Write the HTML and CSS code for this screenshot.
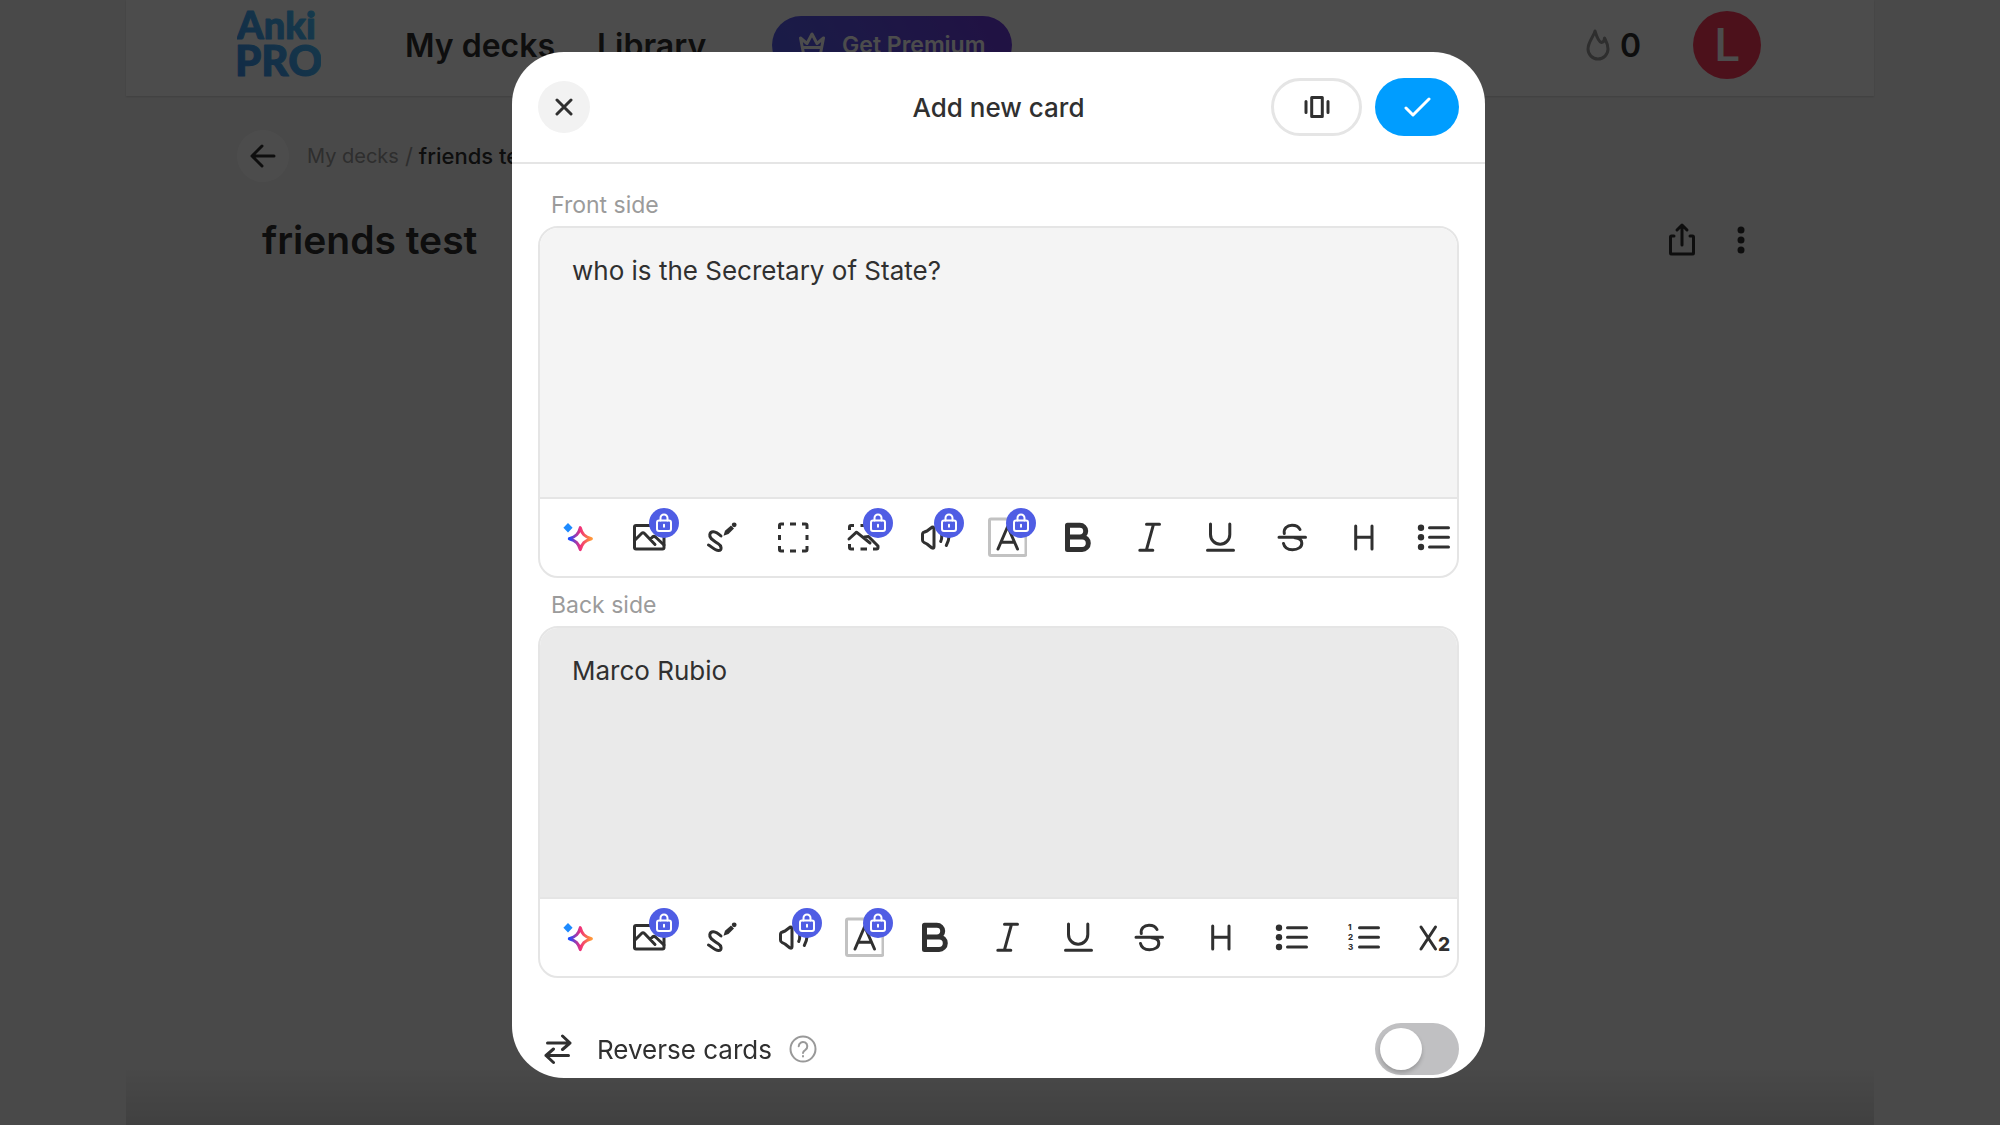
FILE: index.html
```html
<!DOCTYPE html>
<html lang="en">

<head>
    <meta charset="UTF-8">
    <meta name="viewport" content="width=device-width, initial-scale=1.0">
    <title>Anki Pro - friends test</title>
    <link rel="stylesheet" href="styles.css">
</head>

<body>

    <!-- shared icons -->
    <svg class="sprite" width="0" height="0" aria-hidden="true">
        <defs>
            <linearGradient id="spark" x1="0" y1="0" x2="1" y2="0">
                <stop offset="0" stop-color="#1a4bff" />
                <stop offset="0.5" stop-color="#f0307a" />
                <stop offset="1" stop-color="#ff9838" />
            </linearGradient>
            <linearGradient id="logo" gradientUnits="userSpaceOnUse" x1="0" y1="70" x2="84" y2="0">
                <stop offset="0" stop-color="#3c8ee8" />
                <stop offset="1" stop-color="#4bc4ff" />
            </linearGradient>
        </defs>
        <symbol id="i-ai" viewBox="0 0 40 40">
            <path fill="#1e8bff" stroke="none" d="M9 6l4.600 4.700L9 15.400l-4.600-4.700z" />
            <path stroke="url(#spark)" d="M21.300 10.600C23 17 25.500 19.500 32.400 21.700C25.500 23.800 23 26.300 21.300 32.600C19.600 26.300 17 23.800 10.300 21.700C17 19.500 19.600 17 21.300 10.600z" />
        </symbol>
        <symbol id="i-image" viewBox="0 0 40 40">
            <rect x="4.500" y="8.500" width="29.500" height="23.500" rx="1.500" />
            <path d="M5 23l6.500-6.500q1.500-1.500 3 0L25 27.500M20.500 22l2-2q1.500-1.300 3 0L34 28" />
        </symbol>
        <symbol id="i-draw" viewBox="0 0 40 40">
            <path d="M6.500 28C9.500 29.500 12.500 33.500 16.500 33.500C20.500 33.500 19.500 28.500 16 26.500C11.500 23.500 7 21.500 7.800 17.500C8.600 13.500 13 13.500 19 19" />
            <path class="solid" d="M21.500 18.800l1.500-5 6-5.300 3 3-5.500 5.500z" />
            <circle class="solid" cx="32.200" cy="7.800" r="2.400" />
        </symbol>
        <symbol id="i-select" viewBox="0 0 40 40">
            <path class="cut" d="M6.500 12V8.500a1.500 1.500 0 0 1 1.500-1.500H11M17 7h6M29 7h3.500a1.500 1.500 0 0 1 1.500 1.500V12M34 18v5M34 29v3.500a1.500 1.500 0 0 1-1.500 1.500H29M23 34h-6M11 34H8a1.500 1.500 0 0 1-1.500-1.500V29M6.500 23v-5" />
        </symbol>
        <symbol id="i-scan" viewBox="0 0 40 40">
            <path class="cut" d="M5.500 13V10a1.500 1.500 0 0 1 1.500-1.500H10M16.500 8.500h6.500M29 8.500h3.500a1.500 1.500 0 0 1 1.500 1.500v3M34 29.500v1a1.500 1.500 0 0 1-1.500 1.500H29M23 32h-6.500M10 32H7a1.500 1.500 0 0 1-1.500-1.500V27" />
            <path d="M5 22L12.500 15.200L26 26M20.500 20l4-.5L34 29" />
        </symbol>
        <symbol id="i-audio" viewBox="0 0 40 40">
            <path d="M7.500 17.500q0-2 2-2.500l2.500-1 5-3.800q2-1 2 1.600V29.500q0 2.500-2 1.500l-5-4-3-1.500q-1.500-.7-1.500-2.500z" />
            <path d="M25.500 14q2.500 5.500.2 10.500M32 10q4.500 9-.7 18.500" />
        </symbol>
        <symbol id="i-color" viewBox="0 0 40 40">
            <rect class="frame" x="2.500" y="2" width="36.500" height="36.500" rx="1.500" />
            <path d="M11 32L20.700 9.500L30.500 32M14 25.300h13.500" />
        </symbol>
        <symbol id="i-bold" viewBox="0 0 40 40">
            <path stroke-width="5" d="M9.500 8.200H21.800a5.900 5.900 0 0 1 0 11.800H9.500M21.500 20h2.600a6.200 6.200 0 0 1 0 12.400H9.500V8.200" />
        </symbol>
        <symbol id="i-italic" viewBox="0 0 40 40">
            <path d="M17.500 7.300h13M10.800 33.300h13M24.500 7.300L17.300 33.300" />
        </symbol>
        <symbol id="i-underline" viewBox="0 0 40 40">
            <path d="M10.500 7v10.500a9.600 9.600 0 0 0 19.300 0V7M7.500 33.300h26" />
        </symbol>
        <symbol id="i-strike" viewBox="0 0 40 40">
            <path d="M7 20.300h26.500M12.300 16.500C11.500 11.500 15 8.200 20 8.200C24 8.200 26.800 9.800 28 12.500M11.500 26.500C12.500 31 16 32.700 20.500 32.700C26 32.700 30 30 29.800 26C29.700 23 27 21.200 23 20.800" />
        </symbol>
        <symbol id="i-heading" viewBox="0 0 40 40">
            <path d="M12.700 9v23M29 9v23M12.700 20.300H29" />
        </symbol>
        <symbol id="i-list" viewBox="0 0 40 40">
            <path d="M15.500 10.700H34.500M15.500 20.300H34.500M15.500 30H34.500" />
            <circle class="solid" cx="7" cy="10.700" r="3.200" />
            <circle class="solid" cx="7" cy="20.300" r="3.200" />
            <circle class="solid" cx="7" cy="30" r="3.200" />
        </symbol>
        <symbol id="i-lock" viewBox="0 0 30 30">
            <rect x="8" y="12.500" width="14" height="10.500" rx="2" />
            <path d="M11.500 12.500V10a3.500 3.500 0 0 1 7 0v2.500M15 16.700v2" />
        </symbol>
    </svg>

    <div class="page">
        <header class="topbar">
            <a class="logo" href="#" aria-label="Anki Pro">
                <svg width="84" height="72" viewBox="0 0 84 72">
                    <g fill="url(#logo)" stroke="url(#logo)">
                        <text x="0" y="30" font-size="38">Anki</text>
                        <text x="-2" y="67" font-size="42">PRO</text>
                    </g>
                </svg>
            </a>
            <nav class="nav">
                <a href="#">My decks</a>
                <a href="#">Library</a>
            </nav>
            <button class="premium" type="button">
                <svg width="26" height="26" viewBox="0 0 26 26"><path d="M1.500 6L4.500 21.500H21.500L24.500 6L18 11.500L13 2L8 11.500zM4 15.500H22" /></svg>
                Get Premium
            </button>
            <div class="streak">
                <svg width="24" height="32" viewBox="0 0 24 32"><path d="M9 2C8 7 2 13 2 20a10 10 0 0 0 20 0C22 15 20 12 18.500 9C18.300 12 17 13.500 15.500 13.500C13 13 10.500 7 9 2z" /></svg>
                0
            </div>
            <button class="avatar" type="button">L</button>
        </header>

        <main class="deck">
            <div class="crumbs">
                <button class="back" type="button" aria-label="Back">
                    <svg width="26" height="26" viewBox="0 0 26 26"><path d="M24 13H2M12 3L2 13l10 10" /></svg>
                </button>
                <a href="#">My decks</a>
                <span class="slash">/</span>
                <span class="current">friends test</span>
            </div>
            <div class="deck-head">
                <h1>friends test</h1>
                <button type="button" aria-label="Share">
                    <svg width="28" height="36" viewBox="0 0 28 36"><path d="M6 14H3.500a1 1 0 0 0-1 1V31a1 1 0 0 0 1 1H24.500a1 1 0 0 0 1-1V15a1 1 0 0 0-1-1H22M14 23V3.500M9 8l5-5 5 5" /></svg>
                </button>
                <button type="button" aria-label="More">
                    <svg class="dots" width="8" height="28" viewBox="0 0 8 28"><circle cx="4" cy="4" r="3.500" /><circle cx="4" cy="14" r="3.500" /><circle cx="4" cy="24" r="3.500" /></svg>
                </button>
            </div>
        </main>
        <div class="fade"></div>
    </div>

    <div class="overlay">
        <form class="modal" role="dialog" aria-labelledby="modal-title">
            <div class="modal-head">
                <button class="close" type="button" aria-label="Close">
                    <svg width="18" height="18" viewBox="0 0 18 18"><path d="M2 2l14 14M16 2L2 16" /></svg>
                </button>
                <h2 id="modal-title">Add new card</h2>
                <div class="actions">
                    <button class="preview" type="button" aria-label="Preview">
                        <svg width="28" height="24" viewBox="0 0 28 24"><path d="M8.700 2.500H19.300V21.500H8.700zM3 6.500v11M25 6.500v11" /></svg>
                    </button>
                    <button class="save" type="submit" aria-label="Save">
                        <svg width="28" height="20" viewBox="0 0 28 20"><path d="M3 11l7 7L26 2" /></svg>
                    </button>
                </div>
            </div>

            <div class="modal-body">
                <label class="side-label" for="front">Front side</label>
                <div class="editor front">
                    <textarea id="front" spellcheck="false">who is the Secretary of State?</textarea>
                    <div class="toolbar">
                        <button type="button" aria-label="AI"><svg><use href="#i-ai" /></svg></button>
                        <button type="button" aria-label="Image"><svg><use href="#i-image" /></svg><span class="lock"><svg><use href="#i-lock" /></svg></span></button>
                        <button type="button" aria-label="Draw"><svg><use href="#i-draw" /></svg></button>
                        <button type="button" aria-label="Cloze"><svg><use href="#i-select" /></svg></button>
                        <button type="button" aria-label="Image occlusion"><svg><use href="#i-scan" /></svg><span class="lock"><svg><use href="#i-lock" /></svg></span></button>
                        <button type="button" aria-label="Audio"><svg><use href="#i-audio" /></svg><span class="lock"><svg><use href="#i-lock" /></svg></span></button>
                        <button type="button" aria-label="Text color"><svg><use href="#i-color" /></svg><span class="lock"><svg><use href="#i-lock" /></svg></span></button>
                        <button type="button" aria-label="Bold"><svg><use href="#i-bold" /></svg></button>
                        <button type="button" aria-label="Italic"><svg><use href="#i-italic" /></svg></button>
                        <button type="button" aria-label="Underline"><svg><use href="#i-underline" /></svg></button>
                        <button type="button" aria-label="Strikethrough"><svg><use href="#i-strike" /></svg></button>
                        <button type="button" aria-label="Heading"><svg><use href="#i-heading" /></svg></button>
                        <button type="button" aria-label="Bullet list"><svg><use href="#i-list" /></svg></button>
                    </div>
                </div>

                <label class="side-label" for="back">Back side</label>
                <div class="editor back-side">
                    <textarea id="back" spellcheck="false">Marco Rubio</textarea>
                    <div class="toolbar">
                        <button type="button" aria-label="AI"><svg><use href="#i-ai" /></svg></button>
                        <button type="button" aria-label="Image"><svg><use href="#i-image" /></svg><span class="lock"><svg><use href="#i-lock" /></svg></span></button>
                        <button type="button" aria-label="Draw"><svg><use href="#i-draw" /></svg></button>
                        <button type="button" aria-label="Audio"><svg><use href="#i-audio" /></svg><span class="lock"><svg><use href="#i-lock" /></svg></span></button>
                        <button type="button" aria-label="Text color"><svg><use href="#i-color" /></svg><span class="lock"><svg><use href="#i-lock" /></svg></span></button>
                        <button type="button" aria-label="Bold"><svg><use href="#i-bold" /></svg></button>
                        <button type="button" aria-label="Italic"><svg><use href="#i-italic" /></svg></button>
                        <button type="button" aria-label="Underline"><svg><use href="#i-underline" /></svg></button>
                        <button type="button" aria-label="Strikethrough"><svg><use href="#i-strike" /></svg></button>
                        <button type="button" aria-label="Heading"><svg><use href="#i-heading" /></svg></button>
                        <button type="button" aria-label="Bullet list"><svg><use href="#i-list" /></svg></button>
                        <button type="button" aria-label="Numbered list">
                            <svg viewBox="0 0 40 40">
                                <path d="M16.500 10.700H35.500M16.500 20.300H35.500M16.500 30H35.500" />
                                <text class="num" x="5" y="13">1</text>
                                <text class="num" x="5" y="23">2</text>
                                <text class="num" x="5" y="33">3</text>
                            </svg>
                        </button>
                        <button type="button" aria-label="Subscript">
                            <svg viewBox="0 0 40 40">
                                <path d="M7 10L21.500 32M21.500 10L7 32" />
                                <text class="sub" x="24" y="34">2</text>
                            </svg>
                        </button>
                    </div>
                </div>

                <div class="reverse">
                    <svg class="swap" width="28" height="32" viewBox="0 0 28 32"><path d="M3.500 10H26M18.500 3L26 10l-7.500 6.500M24.500 22.500H2M9.500 16L2 22.500l7.500 7" /></svg>
                    <label for="reverse">Reverse cards</label>
                    <button class="help" type="button" aria-label="Help">
                        <svg width="28" height="28" viewBox="0 0 28 28">
                            <circle cx="14" cy="14" r="12.500" />
                            <path d="M9.700 11.200a4.300 4.300 0 1 1 6.700 3.600Q14 16.300 14 18M14 21v.4" />
                        </svg>
                    </button>
                    <input class="switch" id="reverse" type="checkbox">
                </div>
            </div>
        </form>
    </div>

</body>

</html>
```
FILE: styles.css
```css
* {
    box-sizing: border-box;
}

body {
    margin: 0;
    background: #f5f5f5;
    color: #303030;
    font-family: Inter, "Liberation Sans", sans-serif;
}

a {
    color: inherit;
    text-decoration: none;
}

h1,
h2 {
    margin: 0;
}

button {
    display: flex;
    align-items: center;
    justify-content: center;
    padding: 0;
    border: 0;
    background: none;
    color: inherit;
    font: inherit;
    cursor: pointer;
}

svg {
    display: block;
    fill: none;
    stroke: currentColor;
    stroke-width: 3;
    stroke-linecap: round;
    stroke-linejoin: round;
}

.sprite {
    position: absolute;
}

/* page behind the modal */
.page {
    display: flex;
    flex-direction: column;
    max-width: 1748px;
    min-height: 100vh;
    margin: 0 auto;
}

.topbar {
    display: flex;
    align-items: center;
    height: 96px;
    padding: 0 113px 6px 111px;
    background: #fff;
    box-shadow: 0 1px 2px rgba(0, 0, 0, 0.15);
}

.logo text {
    font-family: Lato, sans-serif;
    font-weight: 900;
    stroke-width: 1;
}

.nav {
    display: flex;
    gap: 42px;
    margin: 0 66px 0 84px;
    font-size: 32px;
    font-weight: 600;
}

.premium {
    gap: 17px;
    width: 240px;
    height: 58px;
    border-radius: 29px;
    background: linear-gradient(60deg, #5660f0, #6f3ae0);
    color: #fff;
    font-size: 23px;
    font-weight: 600;
}

.streak {
    display: flex;
    align-items: center;
    gap: 10px;
    margin-left: auto;
    font-size: 32px;
    font-weight: 600;
}

.streak svg {
    color: #999;
}

.avatar {
    width: 68px;
    height: 68px;
    margin-left: 52px;
    border-radius: 50%;
    background: #ff3b5c;
    color: #fff;
    font-family: Roboto, sans-serif;
    font-size: 46px;
    font-weight: 500;
}

.deck {
    padding: 34px 113px 34px 111px;
}

.crumbs {
    display: flex;
    align-items: center;
    color: #999;
    font-size: 20px;
}

.back {
    width: 52px;
    height: 52px;
    margin-right: 18px;
    border-radius: 50%;
    background: #fff;
    color: #303030;
}

.slash {
    margin: 0 6px;
    font-size: 22px;
}

.current {
    color: #303030;
    font-size: 22px;
    font-weight: 500;
}

.deck-head {
    display: flex;
    align-items: center;
    gap: 41px;
    padding: 34px 16px 0 25px;
}

.deck-head h1 {
    margin-right: auto;
    font-size: 39px;
    font-weight: 600;
}

.dots {
    fill: currentColor;
    stroke: none;
}

.fade {
    height: 60px;
    margin-top: auto;
    background: linear-gradient(transparent, rgba(0, 0, 0, 0.12));
}

/* modal */
.overlay {
    position: fixed;
    inset: 0;
    padding: 52px 3px 0 0;
    background: rgba(0, 0, 0, 0.7);
    overflow: auto;
}

.modal {
    max-width: 973px;
    margin: 0 auto;
    border-radius: 52px;
    background: #fff;
    overflow: hidden;
}

.modal-head {
    display: grid;
    grid-template-columns: 1fr auto 1fr;
    align-items: center;
    height: 112px;
    padding: 0 26px;
    border-bottom: 2px solid #e5e5e5;
}

.modal-head h2 {
    font-size: 26px;
    font-weight: 500;
}

.close {
    width: 52px;
    height: 52px;
    border-radius: 50%;
    background: #f2f2f2;
}

.actions {
    display: flex;
    justify-content: flex-end;
    gap: 13px;
}

.preview {
    width: 91px;
    height: 58px;
    border: 3px solid #e5e5e5;
    border-radius: 29px;
}

.save {
    width: 84px;
    height: 58px;
    border-radius: 29px;
    background: #009dff;
    color: #fff;
}

.modal-body {
    padding: 14px 26px 3px;
}

.side-label {
    display: block;
    padding: 9px 13px 0;
    height: 48px;
    color: #9b9b9b;
    font-size: 23px;
    line-height: 36px;
}

.editor {
    border: 2px solid #e5e5e5;
    border-radius: 20px;
    overflow: hidden;
}

.editor textarea {
    display: block;
    width: 100%;
    height: 269px;
    padding: 27px 32px;
    border: 0;
    outline: 0;
    background: #f4f4f4;
    color: inherit;
    font: 400 26px/32px Inter, "Liberation Sans", sans-serif;
    resize: none;
}

.back-side textarea {
    background: #eaeaea;
}

.toolbar {
    display: flex;
    align-items: center;
    justify-content: space-between;
    height: 79px;
    padding: 0 3px 2px 19px;
    border-top: 2px solid #e5e5e5;
}

.toolbar button {
    position: relative;
    width: 40px;
    height: 40px;
}

.toolbar svg {
    width: 40px;
    height: 40px;
}

.solid {
    fill: currentColor;
    stroke: none;
}

.cut {
    stroke-linecap: butt;
}

.frame {
    stroke: #c2c2c2;
}

.num,
.sub {
    fill: currentColor;
    stroke: none;
    font-family: Inter, sans-serif;
    font-size: 8px;
    font-weight: 800;
}

.sub {
    font-size: 19px;
}

.lock {
    position: absolute;
    top: -9px;
    left: 19px;
    border-radius: 50%;
    background: #4f5de4;
    color: #fff;
}

.toolbar .lock svg {
    width: 30px;
    height: 30px;
    stroke-width: 2;
}

.reverse {
    display: flex;
    align-items: center;
    margin-top: 45px;
    padding-left: 6px;
    font-size: 26px;
}

.reverse label {
    margin: 0 17px 0 25px;
}

.help {
    color: #999;
}

.help svg {
    stroke-width: 2;
}

.switch {
    appearance: none;
    width: 84px;
    height: 52px;
    margin: 0 0 0 auto;
    padding: 5px;
    border-radius: 26px;
    background: #c0c0c2;
    cursor: pointer;
}

.switch::before {
    content: "";
    display: block;
    width: 42px;
    height: 42px;
    border-radius: 50%;
    background: #fff;
    box-shadow: 0 3px 4px rgba(0, 0, 0, 0.2);
}

.switch:checked {
    background: #009dff;
}

.switch:checked::before {
    margin-left: auto;
}
```
